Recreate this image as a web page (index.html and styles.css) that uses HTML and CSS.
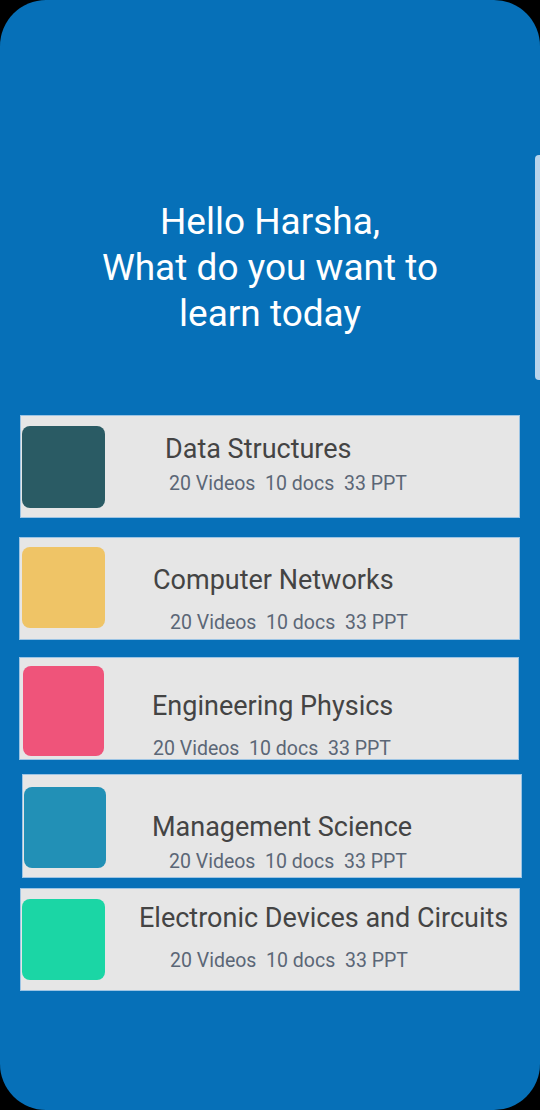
FILE: index.html
```html
<!DOCTYPE html>
<html>
<head>
<meta charset="utf-8">
<link rel="stylesheet" href="styles.css">
</head>
<body>
<div class="screen">
  <div class="edge-handle"></div>
  <h1 class="greeting">Hello Harsha,<br>What do you want to<br>learn today</h1>
  <div class="courses">
    <div class="card card-1">
      <div class="thumb thumb-1"></div>
      <div class="info info-1">
        <div class="title">Data Structures</div>
        <div class="meta">20 Videos  10 docs  33 PPT</div>
      </div>
    </div>
    <div class="card card-2">
      <div class="thumb thumb-2"></div>
      <div class="info info-2">
        <div class="title">Computer Networks</div>
        <div class="meta">20 Videos  10 docs  33 PPT</div>
      </div>
    </div>
    <div class="card card-3">
      <div class="thumb thumb-3"></div>
      <div class="info info-3">
        <div class="title">Engineering Physics</div>
        <div class="meta">20 Videos  10 docs  33 PPT</div>
      </div>
    </div>
    <div class="card card-4">
      <div class="thumb thumb-4"></div>
      <div class="info info-4">
        <div class="title">Management Science</div>
        <div class="meta">20 Videos  10 docs  33 PPT</div>
      </div>
    </div>
    <div class="card card-5">
      <div class="thumb thumb-5"></div>
      <div class="info info-5">
        <div class="title">Electronic Devices and Circuits</div>
        <div class="meta">20 Videos  10 docs  33 PPT</div>
      </div>
    </div>
  </div>
</div>
</body>
</html>
```

FILE: styles.css
```css
* { box-sizing: border-box; }
html, body {
  margin: 0;
  padding: 0;
  background: #000;
  width: 540px;
  height: 1110px;
  overflow: hidden;
}
.screen {
  position: relative;
  width: 540px;
  height: 1110px;
  background: #0670b8;
  border-radius: 46px;
  font-family: Roboto, "Noto Sans", sans-serif;
  padding-top: 199px;
}
.edge-handle {
  position: absolute;
  right: 0;
  top: 155px;
  width: 5px;
  height: 225px;
  background: #b8d4ec;
  border-radius: 4px 0 0 4px;
}
.greeting {
  margin: 0;
  color: #fff;
  font-weight: 400;
  font-size: 37px;
  line-height: 46px;
  text-align: center;
}
.courses {
  display: flex;
  flex-direction: column;
  margin-top: 78px;
}
.card {
  display: flex;
  align-items: flex-start;
  width: 500px;
  height: 103px;
  background: #e6e6e6;
  border: 1px solid #9cc4e4;
}
.card-1 { margin-left: 20px; }
.card-2 { margin-left: 19px; margin-top: 19px; width: 501px; }
.card-3 { margin-left: 19px; margin-top: 17px; }
.card-4 { margin-left: 22px; margin-top: 14px; height: 104px; }
.card-5 { margin-left: 20px; margin-top: 10px; }

.thumb {
  flex: none;
  width: 83px;
  height: 82px;
  border-radius: 8px;
}
.thumb-1 { background: #2a5b64; margin: 10px 0 0 1px; }
.thumb-2 { background: #efc466; margin: 9px 0 0 2px; height: 81px; }
.thumb-3 { background: #ef547a; margin: 8px 0 0 3px; width: 81px; height: 90px; }
.thumb-4 { background: #2290b6; margin: 12px 0 0 1px; width: 82px; height: 81px; }
.thumb-5 { background: #1bd6a5; margin: 10px 0 0 1px; height: 81px; }

.info {
  display: flex;
  flex-direction: column;
}
.title {
  color: #444444;
  font-size: 27px;
  line-height: 30px;
  white-space: nowrap;
}
.meta {
  color: #5b6676;
  font-size: 19.5px;
  line-height: 24px;
  white-space: pre;
}
.info-1 { margin-left: 60px; padding-top: 18px; }
.info-1 .meta { margin-top: 8px; padding-left: 4px; }
.info-2 { margin-left: 48px; padding-top: 27px; }
.info-2 .meta { margin-top: 16px; padding-left: 17px; }
.info-3 { margin-left: 48px; padding-top: 33px; }
.info-3 .meta { margin-top: 16px; padding-left: 1px; }
.info-4 { margin-left: 46px; padding-top: 37px; }
.info-4 .meta { margin-top: 8px; padding-left: 17px; }
.info-5 { margin-left: 34px; padding-top: 14px; }
.info-5 .meta { margin-top: 16px; padding-left: 31px; }
```
